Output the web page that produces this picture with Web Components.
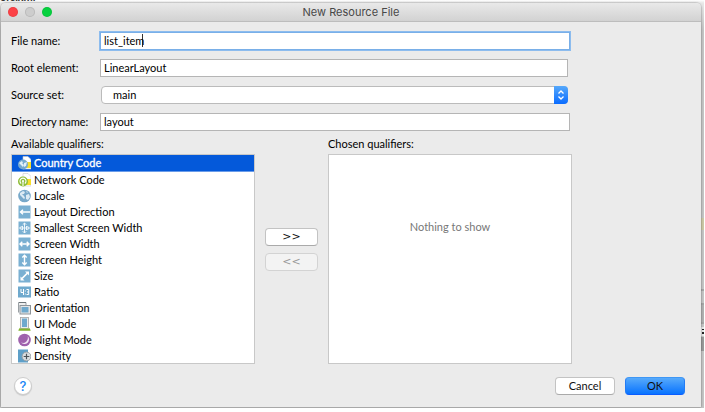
<!DOCTYPE html>
<html lang="en"><head><meta charset="utf-8"><title>New Resource File</title>
<style>
html{height:100%}
body{margin:0;height:100%;overflow:hidden;background:#fff;font:11px/16px Lato,"Noto Sans",sans-serif;color:#000}
</style></head><body>
<resource-dialog></resource-dialog>
<script>
const define=(name,html,setup)=>customElements.define(name,class extends HTMLElement{
  connectedCallback(){
    if(this.shadowRoot)return;
    const t=document.createElement('template');
    t.innerHTML=typeof html==='function'?html(this):html;
    this.attachShadow({mode:'open'}).append(t.content.cloneNode(true));
    if(setup)setup(this);
  }
});

const sq='<rect x=".5" y=".5" width="12" height="13" fill="#7ab0d2"/>';
const line='fill="none" stroke="#fff" stroke-width="1.4"';
const globe='<circle cx="6.500" cy="7" r="6.300" fill="#78a9ca"/><path d="M2 4l3-2 2 1-1 2-2 0 2 2 1 2-1 1-3-3-1-1zM8 6l3-1 1 3-2 3-2-1 0-2zM8 2l2 1-1 1z" fill="#dcebf4"/>';
const doc='<path d="M5 .5h5l3 3V13H5z" fill="#fff" stroke="#c9c9c9" stroke-width=".6"/><path d="M8 6h5v6H8z" fill="#f7df2b"/>';
const icons={
 country:doc+'<circle cx="5" cy="8.500" r="5" fill="#76a9cf"/><path d="M1 7l3-2 1 2-1 0 2 2-1 2-3-3zM6 7l3-1-1 4-2 1z" fill="#e3f0f7"/>',
 network:doc+'<circle cx="5" cy="8.500" r="5" fill="#8fbd3a"/><path d="M5 13V8M3.200 10.500a3 3 0 1 1 3.600 0" fill="none" stroke="#fff" stroke-width="1.100"/><circle cx="5" cy="8" r="1" fill="#fff"/>',
 locale:globe,
 direction:sq+'<path d="M2.500 7H12M5 4.800L2.500 7 5 9.200" '+line+'/>',
 smallest:sq+'<path d="M1.500 7h10M6.500 2v10M3.700 5L1.700 7l2 2M9.300 5l2 2-2 2M4.700 3.800l1.800-1.800 1.800 1.800M4.700 10.200l1.800 1.800 1.800-1.800M4.500 5v4M8.500 5v4" fill="none" stroke="#eef6fb" stroke-width="1"/>',
 width:sq+'<path d="M2 7h9M4.300 4.800L2 7l2.300 2.200M8.700 4.800L11 7 8.700 9.200" '+line+'/>',
 height:sq+'<path d="M6.500 2.500v9M4.300 4.500l2.200-2.200 2.200 2.200M4.300 9.500l2.200 2.200 2.200-2.200" '+line+'/>',
 size:sq+'<path d="M4 9.500L9.500 4" stroke="#fff" stroke-width="1.700"/><path d="M7 2.500h4v4zM2.500 7.500v4h4z" fill="#fff"/>',
 ratio:'<rect x="0" y="1.500" width="13" height="11" fill="#6fa9cd"/><path d="M3 4v3.500h3M5.500 4v6M7.300 5.500v1M7.300 8.500v1M8.500 4.500h2.200v5H8.500M9 7h1.700" fill="none" stroke="#fff"/>',
 orientation:'<path d="M.5 11.500V1.500h7.500V4" fill="#eee" stroke="#9ba1a5"/><path d="M1 1.500h7" stroke="#6d7579"/><rect x="2" y="4.500" width="10.500" height="8.500" fill="#e6e6e6" stroke="#8d9499"/><rect x="3.500" y="6" width="7" height="5.500" fill="#6fa9cd"/>',
 ui:'<rect x="2.500" y=".5" width="8" height="11" fill="#ececec" stroke="#a5a5a5" stroke-width=".8"/><rect x="4" y="1.500" width="5" height="8.500" fill="#6fa9cd"/><path d="M1.500 10.500L.3 13.700h12.400l-1.200-3.200v1h-10z" fill="#83b32f"/>',
 night:'<circle cx="6.500" cy="7" r="6.300" fill="#9f62ad"/><path d="M9.500 3A5 5 0 0 1 3 9.500 4.600 4.600 0 1 0 9.500 3z" fill="#f4e8f6"/>',
 density:'<path d="M0 .5h10v13H0z" fill="#5d9fc8"/><circle cx="8.500" cy="7.500" r="4.400" fill="#d8dde0" stroke="#9aa1a5"/><path d="M8.500 4.700v5.600M5.700 7.500h5.600" stroke="#4a5358" stroke-width="1.200"/>'
};

define('mac-titlebar',`<style>
:host{display:grid;grid-template-columns:1fr auto 1fr;align-items:center;height:18px;padding:0 7px;border-bottom:1px solid #bdbdbd;background:linear-gradient(#e9e9e9,#d2d2d2);color:#484848;border-radius:4px 4px 0 0;font-family:Inter,sans-serif}
.lights{display:flex;gap:7px}
button{width:10px;height:10px;padding:0;border:0;border-radius:50%;background:#fc4146;box-shadow:inset 0 0 0 1px #0001}
button:nth-child(2){background:#cdcdcd;box-shadow:inset 0 0 0 1px #bbb}
button:nth-child(3){background:#07d13f}
</style><div class="lights"><button aria-label="Close"></button><button aria-label="Minimize" disabled></button><button aria-label="Zoom"></button></div><slot></slot>`);

define('text-row',e=>`<style>
:host{display:grid;grid-template-columns:89px minmax(0,1fr);align-items:center;height:27px}
input{box-sizing:border-box;width:100%;height:18px;margin:0;padding:0 3px;border:1px solid #b5b5b5;border-radius:0;background:#fff;font:inherit;color:inherit;outline:0}
div{display:flex;align-items:center;padding-right:2px}
:host([wide]) div{padding-right:0}
:host([active]) input{border-color:#79afe8;box-shadow:0 0 0 1px #8dbcee;caret-color:transparent;background:linear-gradient(#333,#333) 41px 50%/1px 13px no-repeat #fff}
</style><label for="f">${e.getAttribute('label')}</label><div><input id="f" value="${e.getAttribute('value')}"></div>`);

define('select-row',e=>`<style>
:host{display:grid;grid-template-columns:90px minmax(0,1fr);align-items:center;height:27px}
.box{display:grid;grid-template-columns:minmax(0,1fr) 14px;margin-right:2px;height:18px}
select{grid-area:1/1/2/3;appearance:none;box-sizing:border-box;width:100%;height:18px;margin:0;padding:0 11px;border:1px solid #bbb;border-radius:4px;background:#fff;font:inherit;color:inherit}
svg{grid-area:1/2;width:14px;height:18px;border-radius:0 4px 4px 0;background:linear-gradient(#55a8fb,#0a6cff);pointer-events:none;z-index:1}
</style><label for="s">${e.getAttribute('label')}</label><div class="box"><select id="s"><option>main</option></select><svg viewBox="0 0 14 18"><path d="M4.500 7.500L7 5 9.500 7.500M4.500 10.500L7 13 9.500 10.500" fill="none" stroke="#fff" stroke-width="1.300"/></svg></div>`);

define('qualifier-item',e=>`<style>
:host{display:flex;flex:none;height:16px;align-items:center;gap:3px;padding-left:6px}
:host([selected]){background:#0459da;color:#fff;border-bottom:1px solid #6a9ce9;-webkit-text-stroke:.3px #fff}
svg{width:13px;height:14px;flex:none}
</style><svg viewBox="0 0 13 14" aria-hidden="true">${icons[e.getAttribute('icon')]}</svg><slot></slot>`,e=>e.setAttribute('role','option'));

define('qualifier-panel',e=>`<style>
:host{display:flex;flex-direction:column;min-width:0;min-height:0}
.label{height:19px;line-height:18px}
.list{display:flex;flex-direction:column;flex:1;min-height:0;border:1px solid #c8c8c8;background:#fff;overflow:hidden}
</style><div class="label" id="l">${e.getAttribute('label')}</div><div class="list" role="listbox" aria-labelledby="l"><slot></slot></div>`);

define('empty-note',`<style>:host{padding-top:64px;text-align:center;color:#777}</style><slot></slot>`);

define('mac-button',e=>`<style>
:host{display:block}
button{box-sizing:border-box;display:block;width:100%;height:18px;padding:0;border:1px solid #c3c3c3;border-bottom-color:#aaa;border-radius:4px;background:#fff;font:inherit;line-height:16px;color:#111}
button:disabled{background:#f3f3f3;border-color:#d3d3d3;color:#999}
:host([primary]) button{border-color:#3f97f5 #237cf5 #0a5cff;background:linear-gradient(#57aafb,#0873ff)}
</style><button ${e.hasAttribute('off')?'disabled':''}><slot></slot></button>`);

define('help-button',`<style>
button{display:block;width:18px;height:18px;padding:0;border:1px solid #ccc;border-radius:50%;background:#fff;font:500 13px/16px Inter,sans-serif;color:#1b86f5;box-shadow:0 1px 1px #0002}
</style><button aria-label="Help">?</button>`);

define('resource-dialog',`<style>
:host{display:block;box-sizing:border-box;height:100%;padding:0 1px 4px 0}
.desk{position:relative;box-sizing:border-box;height:100%;padding:3px 3px 1px 1px;overflow:hidden;background:linear-gradient(#fff,#e8e8e8 3px,#c4c4c4 30px,#c4c4c4)}
.behind{position:absolute;left:0;top:-10px;line-height:14px;font-size:11px;font-weight:700;color:#333}
.edge{position:absolute;right:0;top:0;width:3px;height:100%}
main{position:relative;display:flex;flex-direction:column;height:100%;background:#ebebeb;border-radius:5px 5px 0 0;box-shadow:0 0 2px #0008}
.form{margin-right:131px;padding:5px 0 0 10px}
.lists{display:grid;grid-template-columns:minmax(0,1fr) 53px minmax(0,1fr);column-gap:10px;flex:1;min-height:0;margin:0 129px 0 10px}
.move{display:flex;flex-direction:column;gap:7px;padding-top:93px}
.move mac-button{font-family:"DejaVu Sans",sans-serif}
footer{display:flex;align-items:center;gap:10px;padding:1px 16px 0 13px;height:42px}
help-button{margin-right:auto}
footer mac-button{width:60px}
</style><div class="desk"><span class="behind">ors.xml</span>
<svg class="edge" viewBox="0 0 3 408" preserveAspectRatio="none" aria-hidden="true"><path d="M0 218h3v12H0z" fill="#cbc8a5"/><path d="M0 290h3M0 304h3M0 323h3" stroke="#888"/><path d="M0 305h3v17H0z" fill="#b0b0b0"/><path d="M0 327h3v9H0z" fill="#e6e6e6"/><path d="M1 329h2v1H1zM1 332h2v2H1z" fill="#222"/><path d="M0 337h3v14H0z" fill="#999"/></svg>
<main>
<mac-titlebar>New Resource File</mac-titlebar>
<div class="form">
<text-row label="File name:" value="list_item" wide active></text-row>
<text-row label="Root element:" value="LinearLayout"></text-row>
<select-row label="Source set:"></select-row>
<text-row label="Directory name:" value="layout" wide></text-row>
</div>
<div class="lists">
<qualifier-panel label="Available qualifiers:">
<qualifier-item icon="country" selected>Country Code</qualifier-item>
<qualifier-item icon="network">Network Code</qualifier-item>
<qualifier-item icon="locale">Locale</qualifier-item>
<qualifier-item icon="direction">Layout Direction</qualifier-item>
<qualifier-item icon="smallest">Smallest Screen Width</qualifier-item>
<qualifier-item icon="width">Screen Width</qualifier-item>
<qualifier-item icon="height">Screen Height</qualifier-item>
<qualifier-item icon="size">Size</qualifier-item>
<qualifier-item icon="ratio">Ratio</qualifier-item>
<qualifier-item icon="orientation">Orientation</qualifier-item>
<qualifier-item icon="ui">UI Mode</qualifier-item>
<qualifier-item icon="night">Night Mode</qualifier-item>
<qualifier-item icon="density">Density</qualifier-item>
</qualifier-panel>
<div class="move"><mac-button>&gt;&gt;</mac-button><mac-button off>&lt;&lt;</mac-button></div>
<qualifier-panel label="Chosen qualifiers:"><empty-note>Nothing to show</empty-note></qualifier-panel>
</div>
<footer><help-button></help-button><mac-button>Cancel</mac-button><mac-button primary>OK</mac-button></footer>
</main></div>`);
</script></body></html>
